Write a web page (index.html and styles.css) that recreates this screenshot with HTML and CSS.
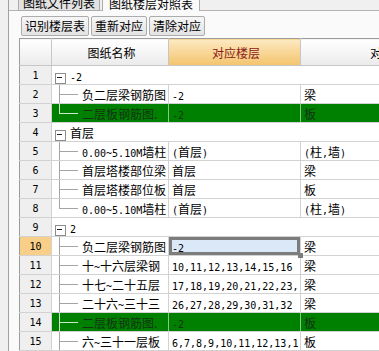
FILE: index.html
```html
<!DOCTYPE html>
<html>
    <head>
        <meta charset="utf-8">
        <title>图纸楼层对照表</title>
        <link rel="stylesheet" href="styles.css">
    </head>
    <body>
        <div class="pane">
            <div class="tabs">
                <div class="tab">图纸文件列表</div>
                <div class="tab active">图纸楼层对照表</div>
            </div>
            <div class="toolbar">
                <button>识别楼层表</button>
                <button>重新对应</button>
                <button>清除对应</button>
            </div>
            <div class="grid_wrap">
                <table class="grid">
                    <colgroup>
                        <col class="c_rn">
                        <col class="c_name">
                        <col class="c_floor">
                        <col class="c_type">
                    </colgroup>
                    <thead>
                        <tr>
                            <th class="rn"></th>
                            <th>图纸名称</th>
                            <th class="hot">对应楼层</th>
                            <th>对应类型</th>
                        </tr>
                    </thead>
                    <tbody>
                        <tr class="group">
                            <td class="rn">1</td>
                            <td colspan="3" class="name"><span class="node"></span><span class="a">-2</span></td>
                        </tr>
                        <tr>
                            <td class="rn">2</td>
                            <td class="name"><span class="tree"></span>负二层梁钢筋图</td>
                            <td><span class="a">-2</span></td>
                            <td>梁</td>
                        </tr>
                        <tr class="hit">
                            <td class="rn">3</td>
                            <td class="name"><span class="tree end"></span>二层板钢筋图.</td>
                            <td><span class="a">-2</span></td>
                            <td>板</td>
                        </tr>
                        <tr class="group">
                            <td class="rn">4</td>
                            <td colspan="3" class="name"><span class="node"></span>首层</td>
                        </tr>
                        <tr>
                            <td class="rn">5</td>
                            <td class="name"><span class="tree"></span><span class="a">0.00~5.10M</span>墙柱</td>
                            <td><span class="a">(</span>首层<span class="a">)</span></td>
                            <td><span class="a">(</span>柱<span class="a">,</span>墙<span class="a">)</span></td>
                        </tr>
                        <tr>
                            <td class="rn">6</td>
                            <td class="name"><span class="tree"></span>首层塔楼部位梁</td>
                            <td>首层</td>
                            <td>梁</td>
                        </tr>
                        <tr>
                            <td class="rn">7</td>
                            <td class="name"><span class="tree"></span>首层塔楼部位板</td>
                            <td>首层</td>
                            <td>板</td>
                        </tr>
                        <tr>
                            <td class="rn">8</td>
                            <td class="name"><span class="tree end"></span><span class="a">0.00~5.10M</span>墙柱</td>
                            <td><span class="a">(</span>首层<span class="a">)</span></td>
                            <td><span class="a">(</span>柱<span class="a">,</span>墙<span class="a">)</span></td>
                        </tr>
                        <tr class="group">
                            <td class="rn">9</td>
                            <td colspan="3" class="name"><span class="node"></span><span class="a">2</span></td>
                        </tr>
                        <tr>
                            <td class="rn current">10</td>
                            <td class="name"><span class="tree"></span>负二层梁钢筋图</td>
                            <td class="sel"><span class="a">-2</span></td>
                            <td>梁</td>
                        </tr>
                        <tr>
                            <td class="rn">11</td>
                            <td class="name"><span class="tree"></span>十<span class="a">~</span>十六层梁钢</td>
                            <td><span class="a">10,11,12,13,14,15,16</span></td>
                            <td>梁</td>
                        </tr>
                        <tr>
                            <td class="rn">12</td>
                            <td class="name"><span class="tree"></span>十七<span class="a">~</span>二十五层</td>
                            <td><span class="a">17,18,19,20,21,22,23,</span></td>
                            <td>梁</td>
                        </tr>
                        <tr>
                            <td class="rn">13</td>
                            <td class="name"><span class="tree"></span>二十六<span class="a">~</span>三十三</td>
                            <td><span class="a">26,27,28,29,30,31,32</span></td>
                            <td>梁</td>
                        </tr>
                        <tr class="hit">
                            <td class="rn">14</td>
                            <td class="name"><span class="tree"></span>二层板钢筋图.</td>
                            <td><span class="a">-2</span></td>
                            <td>板</td>
                        </tr>
                        <tr>
                            <td class="rn">15</td>
                            <td class="name"><span class="tree"></span>六<span class="a">~</span>三十一层板</td>
                            <td><span class="a">6,7,8,9,10,11,12,13,1</span></td>
                            <td>板</td>
                        </tr>
                    </tbody>
                </table>
            </div>
        </div>
    </body>
</html>
```

FILE: styles.css
```css
* {
    box-sizing: border-box;
}

body {
    margin: 0;
    height: 351px;
    overflow: hidden;
    background-color: #f0f0f0;
    font-family: "Noto Sans CJK SC", sans-serif;
    font-size: 12px;
    color: #000;
}

.a {
    font-family: "DejaVu Sans Mono", monospace;
    font-size: 10px;
    line-height: 10px;
}

.pane {
    margin-left: 8px;
    height: 351px;
    border-left: 1px solid #a0a0a0;
    background-color: #fafafa;
    overflow: hidden;
}

/* tabs, cut off at the top */
.tabs {
    height: 11px;
    display: flex;
    align-items: flex-end;
    padding-left: 9px;
    background-color: #f0f0f0;
    border-bottom: 1px solid #b4b4b4;
}

.tab {
    flex-shrink: 0;
    line-height: 14px;
    padding: 0 4px;
    margin-bottom: -1px;
    border: 1px solid #acacac;
    border-top: none;
    background-color: #e2e2e2;
    white-space: nowrap;
}

.tab.active {
    margin-left: 2px;
    padding: 0 6px;
    border-bottom: none;
    background-color: #fafafa;
}

.toolbar {
    display: flex;
    gap: 2px;
    padding: 5px 0 2px 12px;
}

.toolbar button {
    height: 20px;
    padding: 0 3px;
    font-family: inherit;
    font-size: 12px;
    line-height: 18px;
    color: #000;
    border: 1px solid #acacac;
    border-radius: 2px;
    background: linear-gradient(#f6f6f6, #e3e3e3);
}

/* grid */
.grid_wrap {
    padding-left: 10px;
}

.grid {
    border-collapse: collapse;
    table-layout: fixed;
    width: 465px;
}

.c_rn { width: 32px; }
.c_name { width: 117px; }
.c_floor { width: 132px; }
.c_type { width: 184px; }

.grid th,
.grid td {
    height: 19px;
    padding: 0 0 0 3px;
    line-height: 17px;
    border: 1px solid #d2d2d2;
    white-space: nowrap;
    overflow: hidden;
    background-color: #fff;
}

.grid th {
    height: 27px;
    font-weight: normal;
    text-align: center;
    border-color: #c6c6c6;
    border-top-color: #9c9c9c;
    background: linear-gradient(#ffffff, #ebebeb);
}

.grid th.hot {
    color: #8a1a1a;
    background: linear-gradient(#fde9c2, #f3c46c);
}

.grid .rn {
    padding: 0;
    text-align: center;
    font-family: "DejaVu Sans Mono", monospace;
    font-size: 10px;
    border-left-color: #9c9c9c;
    background: #efefef;
}

.grid th.rn {
    background: linear-gradient(#ffffff, #ebebeb);
}

.grid td.rn.current {
    background-color: #f8cf88;
}

.grid td.name {
    padding: 0;
}

/* tree lines */
.tree {
    display: inline-block;
    position: relative;
    width: 30px;
    height: 17px;
    vertical-align: top;
}

.tree::before {
    content: "";
    position: absolute;
    left: 7px;
    top: -1px;
    bottom: -1px;
    border-left: 1px solid #a4a4a4;
}

.tree::after {
    content: "";
    position: absolute;
    left: 7px;
    top: 8px;
    width: 19px;
    border-top: 1px solid #a4a4a4;
}

.tree.end::before {
    bottom: 8px;
}

.node {
    display: inline-block;
    position: relative;
    width: 18px;
    height: 17px;
    vertical-align: top;
    background: linear-gradient(#a4a4a4, #a4a4a4) 7px 15px / 1px 3px no-repeat;
}

.node::before {
    content: "";
    position: absolute;
    left: 3px;
    top: 6px;
    width: 9px;
    height: 9px;
    border: 1px solid #8c8c8c;
    background-color: #fff;
}

.node::after {
    content: "";
    position: absolute;
    left: 5px;
    top: 10px;
    width: 5px;
    border-top: 1px solid #222;
}

/* rows marked green */
.hit td:not(.rn) {
    color: #123412;
    background-color: #008000;
    border-left-color: #8cc48c;
    border-right-color: #8cc48c;
}

.hit .tree::before,
.hit .tree::after {
    border-color: #cfe6cf;
}

/* selected cell */
.grid td.sel {
    position: relative;
    overflow: visible;
    background-color: #dae8f8;
    box-shadow: inset 0 0 0 3px #7c7c7c;
}

.grid td.sel::after {
    content: "";
    position: absolute;
    right: -3px;
    bottom: -3px;
    width: 5px;
    height: 5px;
    z-index: 1;
    background-color: #7c7c7c;
}
```
